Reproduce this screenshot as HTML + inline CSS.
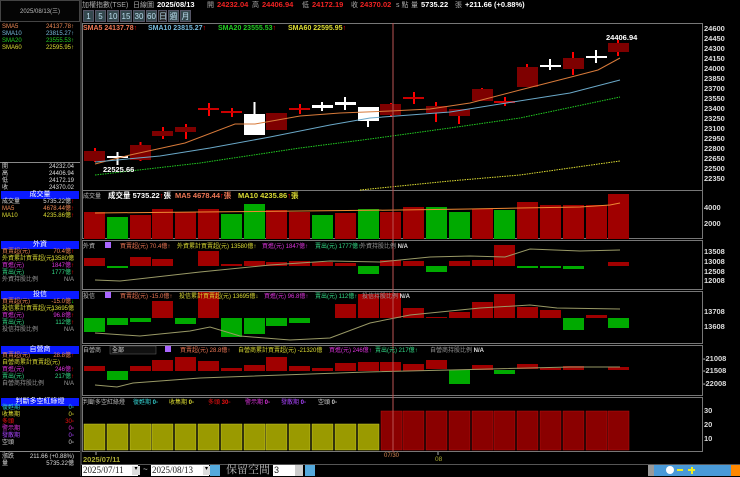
<!DOCTYPE html>
<html><head><meta charset="utf-8"><style>
*{margin:0;padding:0;box-sizing:border-box}
body{width:740px;height:476px;background:#000;overflow:hidden;position:relative;font-family:"Liberation Sans","Noto Sans CJK TC",sans-serif;font-size:7px;color:#ddd}
.a{position:absolute;white-space:nowrap;line-height:1}
.hd{position:absolute;left:1px;width:78px;height:8px;background:#0a1aff;color:#fff;text-align:center;font-size:7px;line-height:8px}
.r{position:absolute;left:2px;width:76px;height:7px;font-size:6px;line-height:7px}
.r span{position:absolute;right:4px}
.btn{position:absolute;top:10px;height:12px;background:#34484e;border:1px solid #556;color:#bde;font-size:8px;text-align:center;line-height:11px}
.v{font-size:7.5px;font-weight:bold;top:1px}
.l{font-size:7px;color:#aaa;top:2px}
</style></head><body>
<div class="a" style="left:0;top:0;width:80px;height:22px;background:#050505;border:1px solid #444;color:#bbb;font-size:6px;text-align:center;line-height:22px">2025/08/13(三)</div>
<div style="position:absolute;left:80px;top:0;width:2px;height:476px;background:#333"></div>
<div class="r" style="top:24px;color:#e85">SMA5<span>24137.78↑</span></div>
<div class="r" style="top:31px;color:#7bd">SMA10<span>23815.27↑</span></div>
<div class="r" style="top:38px;color:#2c2">SMA20<span>23555.53↑</span></div>
<div class="r" style="top:45px;color:#dd3">SMA60<span>22595.95↑</span></div>
<div style="position:absolute;left:0;top:162px;width:80px;height:1px;background:#888"></div>
<div class="r" style="top:164px">開<span>24232.04</span></div>
<div class="r" style="top:171px">高<span>24406.94</span></div>
<div class="r" style="top:178px">低<span>24172.19</span></div>
<div class="r" style="top:185px">收<span>24370.02</span></div>
<div class="hd" style="top:191px">成交量</div>
<div class="r" style="top:199px">成交量<span>5735.22億<b style="color:#f00">↑</b></span></div>
<div class="r" style="top:206px;color:#e85">MA5<span>4678.44億<b style="color:#f00">↑</b></span></div>
<div class="r" style="top:213px;color:#dd3">MA10<span>4235.86億<b style="color:#f00">↑</b></span></div>
<div class="hd" style="top:241px">外資</div>
<div class="r" style="top:249px;color:#e85">買賣超(元)<span>70.4億<b style="color:#f00">↑</b></span></div>
<div class="r" style="top:256px;color:#dd3">外資累計買賣超(元)<span>13580億</span></div>
<div class="r" style="top:263px;color:#d3d">買進(元)<span>1847億<b style="color:#f00">↑</b></span></div>
<div class="r" style="top:270px;color:#3d8">賣出(元)<span>1777億<b style="color:#f00">↑</b></span></div>
<div class="r" style="top:277px;color:#999">外資持股比例<span>N/A</span></div>
<div class="hd" style="top:291px">投信</div>
<div class="r" style="top:299px;color:#e85">買賣超(元)<span>-15.0億<b style="color:#0f0">↓</b></span></div>
<div class="r" style="top:306px;color:#dd3">投信累計買賣超(元)<span>13695億</span></div>
<div class="r" style="top:313px;color:#d3d">買進(元)<span>96.8億<b style="color:#f00">↑</b></span></div>
<div class="r" style="top:320px;color:#3d8">賣出(元)<span>112億<b style="color:#f00">↑</b></span></div>
<div class="r" style="top:327px;color:#999">投信持股比例<span>N/A</span></div>
<div class="hd" style="top:346px">自營商</div>
<div class="r" style="top:353px;color:#e85">買賣超(元)<span>28.8億<b style="color:#f00">↑</b></span></div>
<div class="r" style="top:360px;color:#dd3">自營商累計買賣超(元)</div>
<div class="r" style="top:367px;color:#d3d">買進(元)<span>246億<b style="color:#f00">↑</b></span></div>
<div class="r" style="top:374px;color:#3d8">賣出(元)<span>217億<b style="color:#f00">↑</b></span></div>
<div class="r" style="top:381px;color:#999">自營商持股比例<span>N/A</span></div>
<div class="hd" style="top:398px">判斷多空紅綠燈</div>
<div class="r" style="top:405px;color:#3cc">復甦期<span>0▫</span></div>
<div class="r" style="top:412px;color:#dd3">收集期<span>0▫</span></div>
<div class="r" style="top:419px;color:#e11">多頭<span>30▫</span></div>
<div class="r" style="top:426px;color:#d3d">警示期<span>0▫</span></div>
<div class="r" style="top:433px;color:#a4f">發散期<span>0▫</span></div>
<div class="r" style="top:440px;color:#ccc">空頭<span>0▫</span></div>
<div style="position:absolute;left:0;top:451px;width:80px;height:1px;background:#888"></div>
<div class="r" style="top:454px">漲跌<span>211.66 (+0.88%)</span></div>
<div class="r" style="top:461px">量<span>5735.22億</span></div>

<div class="a l" style="left:82px">加權指數(TSE)</div>
<div class="a l" style="left:133px">日線圖</div>
<div class="a v" style="left:157px;color:#fff">2025/08/13</div>
<div class="a l" style="left:207px">開</div>
<div class="a v" style="left:217px;color:#e22">24232.04</div>
<div class="a l" style="left:252px">高</div>
<div class="a v" style="left:262px;color:#e22">24406.94</div>
<div class="a l" style="left:302px">低</div>
<div class="a v" style="left:312px;color:#e22">24172.19</div>
<div class="a l" style="left:351px">收</div>
<div class="a v" style="left:360px;color:#e22">24370.02</div>
<div class="a l" style="left:396px">s 點</div>
<div class="a l" style="left:411px">量</div>
<div class="a v" style="left:421px;color:#fff">5735.22</div>
<div class="a l" style="left:455px">張</div>
<div class="a v" style="left:465px;color:#fff">+211.66 (+0.88%)</div>
<div class="btn" style="left:83px;width:11px">1</div>
<div class="btn" style="left:95px;width:11px">5</div>
<div class="btn" style="left:107px;width:12px">10</div>
<div class="btn" style="left:120px;width:12px">15</div>
<div class="btn" style="left:133px;width:12px">30</div>
<div class="btn" style="left:146px;width:11px">60</div>
<div class="btn" style="left:158px;width:9px;background:#222">日</div>
<div class="btn" style="left:168px;width:11px">週</div>
<div class="btn" style="left:180px;width:11px">月</div>

<div class="a" style="left:83px;top:25px;font-size:7px;font-weight:bold;color:#e75">SMA5 24137.78<b style="color:#f00">↑</b></div>
<div class="a" style="left:148px;top:25px;font-size:7px;font-weight:bold;color:#7bd">SMA10 23815.27<b style="color:#f00">↑</b></div>
<div class="a" style="left:218px;top:25px;font-size:7px;font-weight:bold;color:#2c2">SMA20 23555.53<b style="color:#f00">↑</b></div>
<div class="a" style="left:288px;top:25px;font-size:7px;font-weight:bold;color:#dd3">SMA60 22595.95<b style="color:#f00">↑</b></div>

<svg style="position:absolute;left:0;top:0" width="740" height="476">
<g fill="none" stroke="#777" stroke-width="1">
<rect x="82.5" y="23.5" width="620" height="167"/>
<rect x="82.5" y="190.5" width="620" height="48"/>
<rect x="82.5" y="240.5" width="620" height="49"/>
<rect x="82.5" y="291.5" width="620" height="52"/>
<rect x="82.5" y="345.5" width="620" height="50"/>
<rect x="82.5" y="397.5" width="620" height="54"/>
</g>
<g stroke="#f00" stroke-width="2">
<line x1="95" y1="148" x2="95" y2="162"/><line x1="140.5" y1="142" x2="140.5" y2="161"/>
<line x1="163" y1="127" x2="163" y2="139"/><line x1="186" y1="124" x2="186" y2="139"/>
<line x1="209" y1="103" x2="209" y2="116"/><line x1="232" y1="108" x2="232" y2="117"/>
<line x1="300" y1="104" x2="300" y2="114"/><line x1="391" y1="103" x2="391" y2="117"/>
<line x1="414" y1="92" x2="414" y2="104"/><line x1="436" y1="102" x2="436" y2="122"/>
<line x1="459" y1="109" x2="459" y2="124"/><line x1="505" y1="97" x2="505" y2="106"/>
<line x1="527" y1="64" x2="527" y2="68"/><line x1="573" y1="52" x2="573" y2="75"/>
<line x1="618" y1="40" x2="618" y2="56"/><line x1="482" y1="88" x2="482" y2="90"/>
</g>
<g fill="#7e0000">
<rect x="84" y="151" width="21" height="10"/><rect x="130" y="145" width="21" height="15"/>
<rect x="152" y="131" width="21" height="5"/><rect x="175" y="127" width="21" height="5"/>
<rect x="198" y="108" width="21" height="2" fill="#c00"/><rect x="221" y="111" width="21" height="2" fill="#c00"/>
<rect x="266" y="113" width="21" height="17"/><rect x="289" y="108" width="21" height="2" fill="#c00"/>
<rect x="380" y="104" width="21" height="11"/><rect x="403" y="97" width="21" height="2" fill="#c00"/>
<rect x="426" y="106" width="21" height="7"/><rect x="449" y="109" width="21" height="7"/>
<rect x="472" y="89" width="21" height="12"/><rect x="494" y="101" width="21" height="2" fill="#c00"/>
<rect x="517" y="67" width="21" height="20"/><rect x="563" y="58" width="21" height="11"/>
<rect x="608" y="43" width="21" height="9"/>
</g>
<g stroke="#fff" stroke-width="2"><line x1="117.5" y1="152" x2="117.5" y2="165"/><line x1="254.5" y1="102" x2="254.5" y2="114"/>
<line x1="322" y1="102" x2="322" y2="111"/><line x1="345" y1="97" x2="345" y2="110"/><line x1="368" y1="121" x2="368" y2="127"/>
<line x1="550" y1="59" x2="550" y2="70"/><line x1="596" y1="50" x2="596" y2="63"/></g>
<g fill="#fff"><rect x="107" y="156" width="21" height="2"/><rect x="244" y="114" width="21" height="21"/>
<rect x="312" y="105" width="21" height="3"/><rect x="335" y="102" width="21" height="3"/><rect x="358" y="107" width="21" height="14"/>
<rect x="540" y="65" width="21" height="2"/><rect x="586" y="56" width="21" height="2"/></g>
<polyline fill="none" stroke="#d77a3a" stroke-width="1" points="95,164 130,155 185,143 235,124 255,124 300,116 340,113 390,111 430,109 470,103 520,90 575,76 598,70 620,58"/>
<polyline fill="none" stroke="#6aa8c8" stroke-width="1" points="95,162 160,156 210,148 270,137 330,125 370,118 410,115 450,112 500,104 570,93 620,80"/>
<polyline fill="none" stroke="#2c2" stroke-width="1" stroke-dasharray="1.5,1" points="95,175 200,163 300,148 370,139 450,128 520,118 620,97"/>
<polyline fill="none" stroke="#dd3" stroke-width="1" stroke-dasharray="1.5,1" points="360,190 450,181 520,175 620,161"/>
<text x="103" y="172" fill="#fff" font-size="7.5" font-weight="bold" font-family="Liberation Sans">22525.66</text>
<text x="606" y="40" fill="#fff" font-size="7.5" font-weight="bold" font-family="Liberation Sans">24406.94</text>
<g fill="#a00000">
<rect x="84" y="212" width="21" height="27"/><rect x="130" y="215" width="21" height="24"/><rect x="152" y="209" width="21" height="30"/>
<rect x="175" y="212" width="21" height="27"/><rect x="198" y="209" width="21" height="30"/><rect x="266" y="210" width="21" height="29"/>
<rect x="289" y="212" width="21" height="27"/><rect x="335" y="213" width="21" height="26"/><rect x="380" y="212" width="21" height="27"/>
<rect x="403" y="207" width="21" height="32"/><rect x="472" y="209" width="21" height="30"/><rect x="517" y="202" width="21" height="37"/>
<rect x="540" y="205" width="21" height="34"/><rect x="563" y="205" width="21" height="34"/><rect x="586" y="205" width="21" height="34"/>
<rect x="608" y="194" width="21" height="45"/></g>
<g fill="#0a0"><rect x="107" y="217" width="21" height="22"/><rect x="221" y="214" width="21" height="25"/><rect x="244" y="204" width="21" height="35"/>
<rect x="312" y="215" width="21" height="24"/><rect x="358" y="209" width="21" height="30"/><rect x="426" y="207" width="21" height="32"/>
<rect x="449" y="212" width="21" height="27"/><rect x="494" y="210" width="21" height="29"/></g>
<polyline fill="none" stroke="#e83" points="95,213 200,212 300,211 400,210 470,209 520,208 580,207 610,205 620,203"/>
<g fill="#a00000"><rect x="84" y="258" width="21" height="8"/><rect x="130" y="257" width="21" height="9"/><rect x="152" y="259" width="21" height="7"/>
<rect x="198" y="251" width="21" height="15"/><rect x="221" y="264" width="21" height="2"/><rect x="244" y="261" width="21" height="5"/>
<rect x="266" y="262" width="21" height="4"/><rect x="289" y="261" width="21" height="5"/><rect x="312" y="262" width="21" height="4"/>
<rect x="335" y="263" width="21" height="3"/><rect x="380" y="260" width="21" height="6"/><rect x="403" y="261" width="21" height="5"/>
<rect x="449" y="261" width="21" height="5"/><rect x="472" y="260" width="21" height="6"/><rect x="494" y="245" width="21" height="21"/>
<rect x="608" y="262" width="21" height="4"/></g>
<g fill="#0a0"><rect x="107" y="266" width="21" height="2"/><rect x="358" y="266" width="21" height="8"/><rect x="426" y="266" width="21" height="6"/>
<rect x="517" y="266" width="21" height="2"/><rect x="540" y="266" width="21" height="2"/><rect x="563" y="266" width="21" height="3"/></g>
<polyline fill="none" stroke="#996" points="95,280 120,281 200,272 270,265 330,261 380,262 430,257 470,256 505,257 530,249 580,251 620,250"/>
<g fill="#a00000"><rect x="152" y="301" width="21" height="17"/><rect x="198" y="292" width="21" height="26"/>
<rect x="335" y="304" width="21" height="14"/><rect x="358" y="294" width="21" height="24"/><rect x="380" y="293" width="21" height="25"/>
<rect x="403" y="308" width="21" height="10"/><rect x="426" y="317" width="21" height="1"/><rect x="449" y="312" width="21" height="6"/>
<rect x="472" y="302" width="21" height="16"/><rect x="494" y="294" width="21" height="24"/><rect x="517" y="307" width="21" height="11"/>
<rect x="540" y="310" width="21" height="8"/><rect x="586" y="315" width="21" height="3"/></g>
<g fill="#0a0"><rect x="84" y="318" width="21" height="14"/><rect x="107" y="318" width="21" height="7"/><rect x="130" y="318" width="21" height="4"/>
<rect x="175" y="318" width="21" height="6"/><rect x="221" y="318" width="21" height="19"/><rect x="244" y="318" width="21" height="16"/>
<rect x="266" y="318" width="21" height="8"/><rect x="289" y="318" width="21" height="5"/><rect x="563" y="318" width="21" height="12"/>
<rect x="608" y="318" width="21" height="10"/></g>
<polyline fill="none" stroke="#996" points="95,333 140,336 190,331 210,327 240,336 290,340 330,338 370,323 410,315 480,308 530,305 557,308 620,309"/>
<g fill="#a00000"><rect x="84" y="366" width="21" height="5"/><rect x="130" y="366" width="21" height="5"/><rect x="152" y="360" width="21" height="11"/>
<rect x="175" y="357" width="21" height="14"/><rect x="198" y="361" width="21" height="10"/><rect x="221" y="368" width="21" height="3"/>
<rect x="244" y="365" width="21" height="6"/><rect x="266" y="357" width="21" height="14"/><rect x="289" y="366" width="21" height="5"/>
<rect x="312" y="368" width="21" height="3"/><rect x="335" y="363" width="21" height="8"/><rect x="358" y="362" width="21" height="9"/>
<rect x="380" y="362" width="21" height="9"/><rect x="403" y="364" width="21" height="7"/><rect x="426" y="360" width="21" height="9"/>
<rect x="472" y="365" width="21" height="5"/><rect x="517" y="364" width="21" height="5"/><rect x="540" y="368" width="21" height="2"/>
<rect x="563" y="366" width="21" height="4"/><rect x="608" y="367" width="21" height="3"/></g>
<g fill="#0a0"><rect x="107" y="371" width="21" height="9"/><rect x="449" y="370" width="21" height="14"/><rect x="494" y="370" width="21" height="4"/></g>
<polyline fill="none" stroke="#996" points="95,385 117,387 133,383 200,378 367,372 450,370 570,367 620,367"/>
<g fill="#9a9a00" stroke="#cc3" stroke-width=".5">
<rect x="84" y="424" width="21" height="26"/><rect x="107" y="424" width="21" height="26"/><rect x="130" y="424" width="21" height="26"/>
<rect x="152" y="424" width="21" height="26"/><rect x="175" y="424" width="21" height="26"/><rect x="198" y="424" width="21" height="26"/>
<rect x="221" y="424" width="21" height="26"/><rect x="244" y="424" width="21" height="26"/><rect x="266" y="424" width="21" height="26"/>
<rect x="289" y="424" width="21" height="26"/><rect x="312" y="424" width="21" height="26"/><rect x="335" y="424" width="21" height="26"/>
<rect x="358" y="424" width="21" height="26"/></g>
<g fill="#8a0000" stroke="#b11" stroke-width=".5">
<rect x="381" y="411" width="21" height="39"/><rect x="403" y="411" width="21" height="39"/><rect x="426" y="411" width="21" height="39"/>
<rect x="449" y="411" width="21" height="39"/><rect x="472" y="411" width="21" height="39"/><rect x="494" y="411" width="21" height="39"/>
<rect x="517" y="411" width="21" height="39"/><rect x="540" y="411" width="21" height="39"/><rect x="563" y="411" width="21" height="39"/>
<rect x="586" y="411" width="21" height="39"/><rect x="608" y="411" width="21" height="39"/></g>
<line x1="393" y1="23" x2="393" y2="452" stroke="#b55" stroke-width="1"/>
<g font-family="Liberation Sans" font-size="7.5" font-weight="bold" fill="#ddd">
<text x="704" y="31">24600</text><text x="704" y="41">24450</text><text x="704" y="51">24300</text><text x="704" y="61">24150</text>
<text x="704" y="71">24000</text><text x="704" y="81">23850</text><text x="704" y="91">23700</text><text x="704" y="101">23550</text>
<text x="704" y="111">23400</text><text x="704" y="121">23250</text><text x="704" y="131">23100</text><text x="704" y="141">22950</text>
<text x="704" y="151">22800</text><text x="704" y="161">22650</text><text x="704" y="171">22500</text><text x="704" y="181">22350</text>
<text x="704" y="210">4000</text><text x="704" y="226">2000</text>
<text x="704" y="254">13508</text><text x="704" y="264">13008</text><text x="704" y="274">12508</text><text x="704" y="283">12008</text>
<text x="704" y="314">13708</text><text x="704" y="329">13608</text>
<text x="703" y="361">-21008</text><text x="703" y="373">-21508</text><text x="703" y="386">-22008</text>
<text x="704" y="413">30</text><text x="704" y="427">20</text><text x="704" y="441">10</text>
</g>
<g font-family="Liberation Sans,Noto Sans CJK TC,sans-serif" font-size="6">
<text x="83" y="198" fill="#bbb">成交量</text><text x="108" y="198" fill="#fff" font-weight="bold" font-size="7.5">成交量 5735.22<tspan fill="#f00">↑</tspan>張</text>
<text x="175" y="198" fill="#e75" font-weight="bold" font-size="7.5">MA5 4678.44<tspan fill="#f00">↑</tspan>張</text>
<text x="238" y="198" fill="#dd3" font-weight="bold" font-size="7.5">MA10 4235.86<tspan fill="#f00">↑</tspan>張</text>
<text x="83" y="248" fill="#bbb">外資</text><rect x="105" y="242" width="6" height="6" fill="#a6f"/>
<text x="120" y="248" fill="#e75">買賣超(元) 70.4億↑</text><text x="177" y="248" fill="#dd3">外資累計買賣超(元) 13580億↑</text>
<text x="262" y="248" fill="#d3d">買進(元) 1847億↑</text><text x="315" y="248" fill="#3d8">賣出(元) 1777億↑</text>
<text x="360" y="248" fill="#999">外資持股比例 <tspan fill="#ddd" font-weight="bold">N/A</tspan></text>
<text x="83" y="298" fill="#bbb">投信</text><rect x="105" y="292" width="6" height="6" fill="#a6f"/>
<text x="120" y="298" fill="#e75">買賣超(元) -15.0億↑</text><text x="179" y="298" fill="#dd3">投信累計買賣超(元) 13695億↓</text>
<text x="264" y="298" fill="#d3d">買進(元) 96.8億↑</text><text x="315" y="298" fill="#3d8">賣出(元) 112億↑</text>
<text x="362" y="298" fill="#999">投信持股比例 <tspan fill="#ddd" font-weight="bold">N/A</tspan></text>
<text x="83" y="352" fill="#bbb">自營商</text><rect x="110" y="346" width="46" height="8" fill="#111" stroke="#666" stroke-width=".5"/><text x="112" y="352" fill="#ddd">全部</text>
<rect x="165" y="346" width="6" height="6" fill="#a6f"/>
<text x="180" y="352" fill="#e75">買賣超(元) 28.8億↑</text><text x="238" y="352" fill="#dd3">自營商累計買賣超(元) -21320億</text>
<text x="329" y="352" fill="#d3d">買進(元) 246億↑</text><text x="375" y="352" fill="#3d8">賣出(元) 217億↑</text>
<text x="430" y="352" fill="#999">自營商持股比例 <tspan fill="#ddd" font-weight="bold">N/A</tspan></text>
<text x="83" y="404" fill="#bbb">判斷多空紅綠燈</text>
<text x="133" y="404" fill="#3cc">復甦期 <tspan font-weight="bold">0</tspan>▫</text>
<text x="169" y="404" fill="#dd3">收集期 <tspan font-weight="bold">0</tspan>▫</text>
<text x="208" y="404" fill="#e11">多頭 <tspan font-weight="bold">30</tspan>▫</text>
<text x="245" y="404" fill="#d3d">警示期 <tspan font-weight="bold">0</tspan>▫</text>
<text x="281" y="404" fill="#a4f">發散期 <tspan font-weight="bold">0</tspan>▫</text>
<text x="318" y="404" fill="#ccc">空頭 <tspan font-weight="bold">0</tspan>▫</text>
<text x="83" y="462" fill="#aa3" font-size="7.5" font-weight="bold">2025/07/11</text>
<text x="384" y="457" fill="#d85" font-size="6">07/30</text>
<text x="435" y="461" fill="#aa3" font-size="6.5">08</text>
</g>
<line x1="96" y1="452" x2="96" y2="455" stroke="#aaa"/><line x1="438" y1="452" x2="438" y2="455" stroke="#aaa"/>
</svg>
<div style="position:absolute;left:81px;top:464px;width:659px;height:12px;background:#000;border-top:1px solid #555"></div>
<div class="a" style="left:82px;top:465px;width:56px;height:11px;background:#fff;color:#222;font-size:9px;line-height:11px;padding-left:1px;font-family:'Liberation Serif',serif">2025/07/11</div>
<div class="a" style="left:132px;top:466px;width:8px;height:9px;background:#ddd;color:#000;font-size:6px;text-align:center">▾</div>
<div class="a" style="left:143px;top:466px;color:#ddd;font-size:8px">~</div>
<div class="a" style="left:151px;top:465px;width:58px;height:11px;background:#fff;color:#222;font-size:9px;line-height:11px;padding-left:1px;font-family:'Liberation Serif',serif">2025/08/13</div>
<div class="a" style="left:203px;top:466px;width:7px;height:9px;background:#ddd;color:#000;font-size:6px;text-align:center">▾</div>
<div class="a" style="left:210px;top:465px;width:10px;height:11px;background:#5ad"></div>
<div class="a" style="left:226px;top:464px;color:#bbb;font-size:11px;font-family:'Noto Serif CJK SC',serif">保留空間</div>
<div class="a" style="left:273px;top:465px;width:22px;height:11px;background:#fff;color:#222;font-size:9px;line-height:11px;padding-left:1px">3</div>
<div class="a" style="left:295px;top:465px;width:8px;height:11px;background:#ccc"></div>
<div class="a" style="left:305px;top:465px;width:10px;height:11px;background:#5ad"></div>
<div class="a" style="left:648px;top:465px;width:92px;height:11px;background:#4a9ad8"></div>
<div class="a" style="left:648px;top:465px;width:6px;height:11px;background:#999"></div>
<div class="a" style="left:666px;top:466px;width:8px;height:8px;border-radius:50%;background:#fff"></div>
<div class="a" style="left:677px;top:469px;width:6px;height:2px;background:#ee2"></div>
<div class="a" style="left:688px;top:469px;width:7px;height:2px;background:#ee2"></div>
<div class="a" style="left:690.5px;top:466.5px;width:2px;height:7px;background:#ee2"></div>
<div class="a" style="left:731px;top:465px;width:9px;height:11px;background:#f80"></div>
</body></html>
